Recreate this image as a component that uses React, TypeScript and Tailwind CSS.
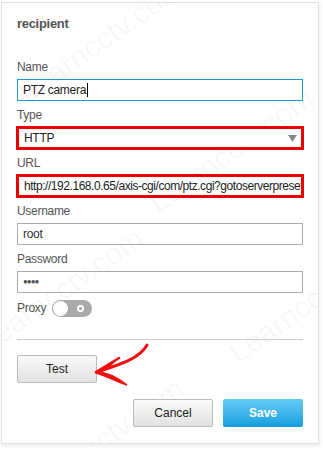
import React, { useState } from "react";

const font = { fontFamily: '"Liberation Sans", Arial, sans-serif' };

function Field({ label, children }: { label: string; children: React.ReactNode }) {
  return (
    <div className="mb-[6px]">
      <div className="text-[12px] tracking-[-0.3px] leading-[15px] text-[#555] pt-[1px] mb-[4px]">{label}</div>
      {children}
    </div>
  );
}

export default function App() {
  const [proxy, setProxy] = useState(false);

  return (
    <div className="w-[323px] h-[451px] bg-white pt-[2px] pl-[1px] relative overflow-hidden" style={font}>
      <div className="relative w-[318px] h-[442px] border border-[#e2e2e2] shadow-[1px_2px_3px_rgba(0,0,0,0.08)] px-[15px] pt-[13px] bg-white">
        {/* watermark */}
        <div className="absolute inset-0 pointer-events-none overflow-hidden text-[#000]/[0.035] text-[30px]">
          <div className="absolute left-[20px] top-[70px] -rotate-[35deg] origin-left whitespace-nowrap">Learncctv.com</div>
          <div className="absolute left-[-20px] top-[320px] -rotate-[35deg] origin-left whitespace-nowrap">Learncctv.com</div>
          <div className="absolute left-[150px] top-[180px] -rotate-[35deg] origin-left whitespace-nowrap">Learncctv.com</div>
          <div className="absolute left-[20px] top-[470px] -rotate-[35deg] origin-left whitespace-nowrap">Learncctv.com</div>
          <div className="absolute left-[230px] top-[330px] -rotate-[35deg] origin-left whitespace-nowrap">Learncctv.com</div>
        </div>

        <div className="relative">
          <div className="text-[13px] tracking-[-0.3px] leading-[16px] font-bold text-[#555]">recipient</div>

          <div className="mt-[27px]">
            <Field label="Name">
              <div className="h-[22px] border border-[#1b9ad6] flex items-center pl-[5px] text-[12px] tracking-[-0.3px] text-[#222]">
                PTZ camera<span className="inline-block w-[1px] h-[14px] bg-black ml-[1px]" />
              </div>
            </Field>

            <Field label="Type">
              <div className="h-[24px] -mx-[1px] -my-[1px] border-[3px] border-[#ee0000] flex items-center justify-between pl-[5px] pr-[4px] text-[12px] tracking-[-0.3px] text-[#222] bg-white">
                <span>HTTP</span>
                <svg width="9" height="7" viewBox="0 0 9 7"><path d="M0 0h9L4.5 7z" fill="#888" /></svg>
              </div>
            </Field>

            <Field label="URL">
              <div className="h-[24px] -mx-[1px] -my-[1px] border-[3px] border-[#ee0000] flex items-center pl-[5px] text-[12px] tracking-[-0.45px] text-[#222] whitespace-nowrap overflow-hidden bg-white">
                http://192.168.0.65/axis-cgi/com/ptz.cgi?gotoserverpresetname=Home
              </div>
            </Field>

            <Field label="Username">
              <div className="h-[22px] border border-[#aaa] flex items-center pl-[5px] text-[12px] tracking-[-0.3px] text-[#333]">root</div>
            </Field>

            <Field label="Password">
              <div className="h-[22px] border border-[#aaa] flex items-center pl-[5px] text-[8px] tracking-[-1px] text-[#555]">●●●●</div>
            </Field>

            <div className="flex items-center gap-[6px] mt-[4px]">
              <span className="text-[12px] tracking-[-0.3px] text-[#555]">Proxy</span>
              <button
                onClick={() => setProxy(!proxy)}
                className="relative w-[40px] h-[17px] rounded-full bg-[#aaa] flex items-center"
              >
                <span className={proxy ? "absolute right-[1px] w-[15px] h-[15px] rounded-full bg-white" : "absolute left-[1px] w-[15px] h-[15px] rounded-full bg-white"} />
                <span className="absolute right-[8px] w-[7px] h-[7px] rounded-full border-[2px] border-white bg-[#999]" />
              </button>
            </div>

            <div className="h-px bg-[#ccc] mt-[22px]" />

            <button className="mt-[15px] w-[80px] h-[28px] border border-[#bbb] rounded-[2px] bg-gradient-to-b from-[#fafafa] to-[#e2e2e2] text-[12px] text-[#222]">
              Test
            </button>

            <div className="flex justify-end gap-[10px] mt-[16px]">
              <button className="w-[80px] h-[28px] border border-[#bbb] rounded-[2px] bg-gradient-to-b from-[#fafafa] to-[#e2e2e2] text-[12px] text-[#222]">
                Cancel
              </button>
              <button className="w-[80px] h-[28px] rounded-[2px] bg-gradient-to-b from-[#62ccf6] to-[#079fdc] text-[12px] font-bold text-white">
                Save
              </button>
            </div>
          </div>
        </div>
      </div>

      {/* red arrow annotation */}
      <svg className="absolute left-0 top-0 pointer-events-none" width="323" height="451">
        <path d="M147 345 C 140 358, 122 364, 97 372" stroke="#ee1111" strokeWidth="3" fill="none" strokeLinecap="round" />
        <path d="M96 372 L 118 359 L 108 369 Z" fill="#ee1111" />
        <path d="M96 372 C 108 372, 118 378, 127 385 C 116 381, 106 376, 96 373 Z" fill="#ee1111" stroke="#ee1111" strokeWidth="1.5" />
        <path d="M96 372 L 119 358" stroke="#ee1111" strokeWidth="2.5" strokeLinecap="round" />
      </svg>
    </div>
  );
}
